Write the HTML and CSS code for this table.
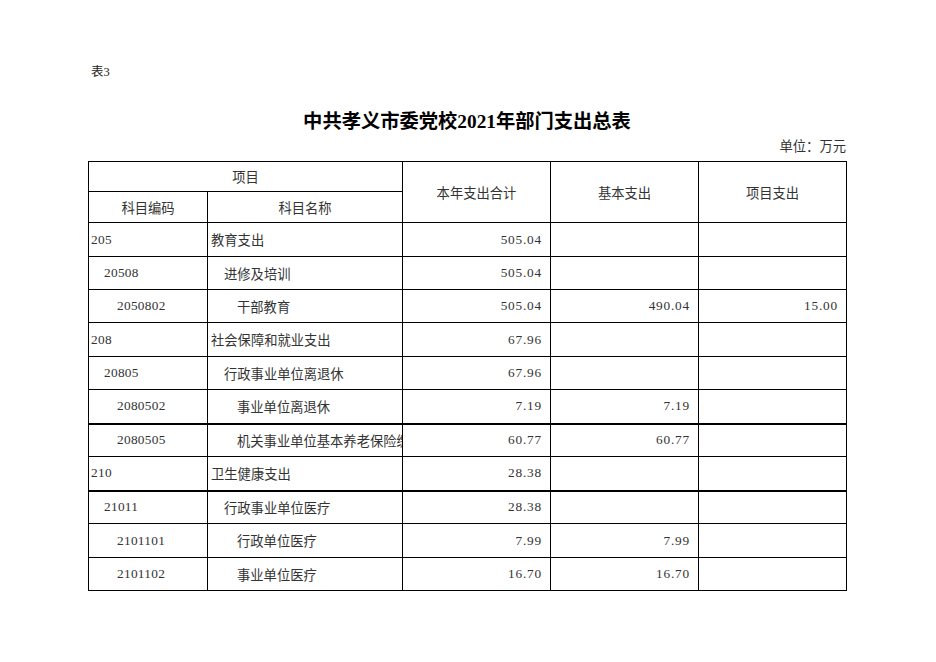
FILE: index.html
```html
<!DOCTYPE html>
<html lang="zh-CN">
<head>
<meta charset="utf-8">
<title>中共孝义市委党校2021年部门支出总表</title>
<link rel="stylesheet" href="styles.css">
</head>
<body>
<div class="page">
  <div class="sheet-label">表3</div>
  <h1 class="title">中共孝义市委党校2021年部门支出总表</h1>
  <div class="unit">单位：万元</div>
  <table class="sheet">
    <colgroup>
      <col class="c-code"><col class="c-name"><col class="c-num"><col class="c-num"><col class="c-num">
    </colgroup>
    <thead>
      <tr class="h1">
        <th colspan="2">项目</th>
        <th rowspan="2">本年支出合计</th>
        <th rowspan="2">基本支出</th>
        <th rowspan="2">项目支出</th>
      </tr>
      <tr class="h2">
        <th>科目编码</th>
        <th>科目名称</th>
      </tr>
    </thead>
    <tbody>
      <tr class="r34"><td class="code">205</td><td class="name">教育支出</td><td class="num">505.04</td><td class="num"></td><td class="num"></td></tr>
      <tr class="r33"><td class="code l1">20508</td><td class="name l1">进修及培训</td><td class="num">505.04</td><td class="num"></td><td class="num"></td></tr>
      <tr class="r33"><td class="code l2">2050802</td><td class="name l2">干部教育</td><td class="num">505.04</td><td class="num">490.04</td><td class="num">15.00</td></tr>
      <tr class="r34"><td class="code">208</td><td class="name">社会保障和就业支出</td><td class="num">67.96</td><td class="num"></td><td class="num"></td></tr>
      <tr class="r33"><td class="code l1">20805</td><td class="name l1">行政事业单位离退休</td><td class="num">67.96</td><td class="num"></td><td class="num"></td></tr>
      <tr class="r34"><td class="code l2">2080502</td><td class="name l2">事业单位离退休</td><td class="num">7.19</td><td class="num">7.19</td><td class="num"></td></tr>
      <tr class="r33 thick"><td class="code l2">2080505</td><td class="name l2"><div class="clip">机关事业单位基本养老保险缴费支出</div></td><td class="num">60.77</td><td class="num">60.77</td><td class="num"></td></tr>
      <tr class="r34"><td class="code">210</td><td class="name">卫生健康支出</td><td class="num">28.38</td><td class="num"></td><td class="num"></td></tr>
      <tr class="r33 thick"><td class="code l1">21011</td><td class="name l1">行政事业单位医疗</td><td class="num">28.38</td><td class="num"></td><td class="num"></td></tr>
      <tr class="r34"><td class="code l2">2101101</td><td class="name l2">行政单位医疗</td><td class="num">7.99</td><td class="num">7.99</td><td class="num"></td></tr>
      <tr class="r33"><td class="code l2">2101102</td><td class="name l2">事业单位医疗</td><td class="num">16.70</td><td class="num">16.70</td><td class="num"></td></tr>
    </tbody>
  </table>
</div>
</body>
</html>
```
FILE: styles.css
```css
html, body {
  margin: 0;
  padding: 0;
  background: #fff;
}
body {
  font-family: "Liberation Serif", "Noto Sans CJK SC", serif;
  color: #111;
}
.page {
  width: 758px;
  padding: 62px 0 0 88px;
}
.sheet-label {
  height: 20px;
  line-height: 20px;
  font-size: 12.5px;
  padding-left: 3px;
  color: #222;
}
.title {
  margin: 25px 0 0 0;
  height: 30px;
  line-height: 30px;
  font-size: 19.3px;
  font-weight: bold;
  text-align: center;
  color: #000;
  font-family: "Liberation Serif", "Noto Sans CJK SC", serif;
}
.unit {
  margin-top: 2px;
  height: 16px;
  line-height: 16px;
  font-size: 13.3px;
  text-align: right;
  color: #333;
}
.sheet {
  margin-top: 6px;
  width: 758px;
  border-collapse: collapse;
  table-layout: fixed;
  font-size: 13.3px;
}
.c-code { width: 119px; }
.c-name { width: 195px; }
.c-num { width: 148px; }
.sheet th, .sheet td {
  border: 1px solid #000;
  padding: 0;
  vertical-align: middle;
  white-space: nowrap;
  overflow: hidden;
  color: #333;
}
.sheet th {
  font-weight: normal;
  text-align: center;
}
.h1 { height: 30px; }
.h2 { height: 31px; }
.r34 { height: 34px; }
.r33 { height: 33px; }
.thick td { border-top: 2px solid #000; }
.code { padding-left: 2px !important; text-align: left; letter-spacing: 0.3px; }
.name { padding-left: 3px !important; text-align: left; }
.code.l1 { padding-left: 15px !important; }
.code.l2 { padding-left: 28px !important; }
.name.l1 { padding-left: 16px !important; }
.name.l2 { padding-left: 29px !important; }
.clip {
  overflow: hidden;
  white-space: nowrap;
}
.num {
  text-align: right;
  letter-spacing: 0.8px;
  padding-right: 8px !important;
}
```
